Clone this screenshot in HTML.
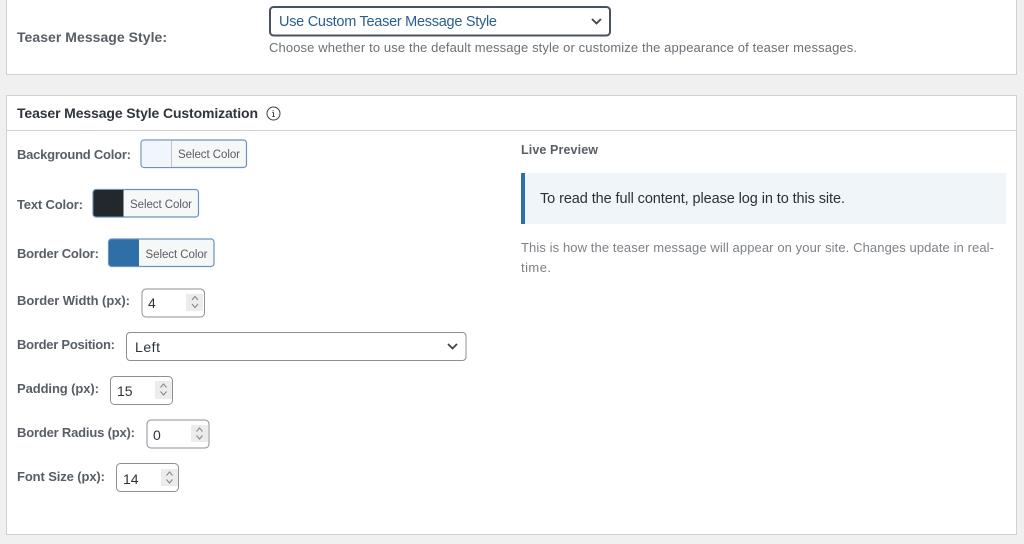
<!DOCTYPE html>
<html lang="en">
<head>
<meta charset="utf-8">
<title>Teaser Message Style</title>
<style>
html,body{margin:0;padding:0;width:1024px;height:544px;overflow:hidden;background:#f0f0f1}
svg{display:block;filter:blur(.35px)}
text{font-family:"Liberation Sans",sans-serif}
.l{font-size:13px;font-weight:700;fill:#585e65}
.b{font-size:11.5px;fill:#585e65}
.v{font-size:14px;fill:#2c3338}
.d{font-size:13px;fill:#6c7177}
.ar{fill:none;stroke:#858a8f;stroke-width:1.1}
.inp{fill:#fff;stroke:#8c8f94;stroke-width:1}
.sw{fill:#f6f7f7;stroke:#6b93bd;stroke-width:1.2}
</style>
</head>
<body>
<svg width="1024" height="544" viewBox="0 0 1024 544" xmlns="http://www.w3.org/2000/svg">
<rect width="1024" height="544" fill="#f0f0f1"/>

<rect x="6.500" y="-2" width="1010" height="76.500" fill="#fff" stroke="#cfd0d2"/>
<text class="l" x="17" y="42" style="font-size:14px" textLength="150" lengthAdjust="spacing">Teaser Message Style:</text>
<rect x="270" y="7" width="340" height="28.500" rx="3.500" fill="#fff" stroke="#4a5260" stroke-width="2"/>
<text x="279" y="26" style="font-size:14.500px;fill:#2a5d8f" textLength="218" lengthAdjust="spacing">Use Custom Teaser Message Style</text>
<path d="M592 19l4.500 4.500 4.500-4.500" fill="none" stroke="#3c434a" stroke-width="1.800"/>
<text class="d" x="269" y="52" textLength="588" lengthAdjust="spacing">Choose whether to use the default message style or customize the appearance of teaser messages.</text>

<rect x="6.500" y="95.500" width="1010" height="439" fill="#fff" stroke="#cfd0d2"/>
<line x1="7" y1="130.500" x2="1016" y2="130.500" stroke="#cfd0d2"/>
<text x="17" y="118" style="font-size:14px;font-weight:700;fill:#2f353b" textLength="241" lengthAdjust="spacing">Teaser Message Style Customization</text>
<circle cx="273.500" cy="113.500" r="6.500" fill="none" stroke="#3c434a" stroke-width="1"/>
<path d="M272.500 110.800h1.200M273.500 112.500v4M272.300 116.500h2.400M272.300 112.500h1.200" fill="none" stroke="#3c434a" stroke-width="1"/>

<text class="l" x="17" y="159" textLength="114" lengthAdjust="spacing">Background Color:</text>
<rect class="sw" x="141" y="140" width="105.500" height="27.500" rx="3"/>
<path d="M141.600 143a2.500 2.500 0 0 1 2.500-2.400H171V167H144a2.500 2.500 0 0 1-2.400-2.500z" fill="#f0f6fc"/>
<line x1="171.500" y1="140.500" x2="171.500" y2="167" stroke="#c3c4c7"/>
<text class="b" x="178" y="158" textLength="62" lengthAdjust="spacing">Select Color</text>

<text class="l" x="17" y="209" textLength="66" lengthAdjust="spacing">Text Color:</text>
<rect class="sw" x="93" y="189.500" width="105.500" height="27.500" rx="3"/>
<path d="M93.500 192.500a2.500 2.500 0 0 1 2.500-2.500H123.500V216.500H96a2.500 2.500 0 0 1-2.500-2.500z" fill="#23282d"/>
<text class="b" x="130" y="208" textLength="62" lengthAdjust="spacing">Select Color</text>

<text class="l" x="17" y="258" textLength="82" lengthAdjust="spacing">Border Color:</text>
<rect class="sw" x="108.500" y="239" width="105.500" height="27.500" rx="3"/>
<path d="M109 242a2.500 2.500 0 0 1 2.500-2.500H139V266H111.500a2.500 2.500 0 0 1-2.500-2.500z" fill="#2e6fa8"/>
<text class="b" x="145.500" y="258" textLength="62" lengthAdjust="spacing">Select Color</text>

<text class="l" x="17" y="305" textLength="113" lengthAdjust="spacing">Border Width (px):</text>
<rect class="inp" x="142" y="289" width="62.500" height="28" rx="4"/>
<text class="v" x="148" y="308">4</text>
<rect x="186" y="294" width="17" height="17" fill="#ececec"/>
<path class="ar" d="M192 300l3-3.500 3 3.500M192 304l3 3.500 3-3.500"/>

<text class="l" x="17" y="349" textLength="98" lengthAdjust="spacing">Border Position:</text>
<rect class="inp" x="126.500" y="332.500" width="339.500" height="28" rx="3.500"/>
<text class="v" x="135" y="352" textLength="25" lengthAdjust="spacing">Left</text>
<path d="M448 344l4.500 4.500 4.500-4.500" fill="none" stroke="#3c434a" stroke-width="1.800"/>

<text class="l" x="17" y="393" textLength="82" lengthAdjust="spacing">Padding (px):</text>
<rect class="inp" x="110.500" y="376.500" width="62" height="28" rx="4"/>
<text class="v" x="117" y="396">15</text>
<rect x="155" y="381" width="17" height="18" fill="#ececec"/>
<path class="ar" d="M160.500 387.500l3-3.500 3 3.500M160.500 391.500l3 3.500 3-3.500"/>

<text class="l" x="17" y="437" textLength="118" lengthAdjust="spacing">Border Radius (px):</text>
<rect class="inp" x="147" y="420" width="62" height="28" rx="4"/>
<text class="v" x="153" y="440">0</text>
<rect x="191" y="425" width="17" height="17" fill="#ececec"/>
<path class="ar" d="M196.500 431.500l3-3.500 3 3.500M196.500 435.500l3 3.500 3-3.500"/>

<text class="l" x="17" y="481" textLength="88" lengthAdjust="spacing">Font Size (px):</text>
<rect class="inp" x="116.500" y="463.500" width="62" height="28" rx="4"/>
<text class="v" x="123" y="484">14</text>
<rect x="161" y="469" width="17" height="17" fill="#ececec"/>
<path class="ar" d="M166.500 475.500l3-3.500 3 3.500M166.500 479.500l3 3.500 3-3.500"/>

<text x="521" y="154" style="font-size:12.500px;font-weight:700;fill:#585e65" textLength="77" lengthAdjust="spacing">Live Preview</text>
<rect x="521" y="173" width="485.500" height="51" fill="#f0f5fa"/>
<rect x="521" y="173" width="4" height="51" fill="#2e6fa8"/>
<text x="540" y="203" style="font-size:14.500px;fill:#2a3036" textLength="305" lengthAdjust="spacing">To read the full content, please log in to this site.</text>
<text x="521" y="252" style="font-size:13px;fill:#7d8288" textLength="473" lengthAdjust="spacing">This is how the teaser message will appear on your site. Changes update in real-</text>
<text x="521" y="272" style="font-size:13px;fill:#7d8288" textLength="30" lengthAdjust="spacing">time.</text>
</svg>
</body>
</html>
